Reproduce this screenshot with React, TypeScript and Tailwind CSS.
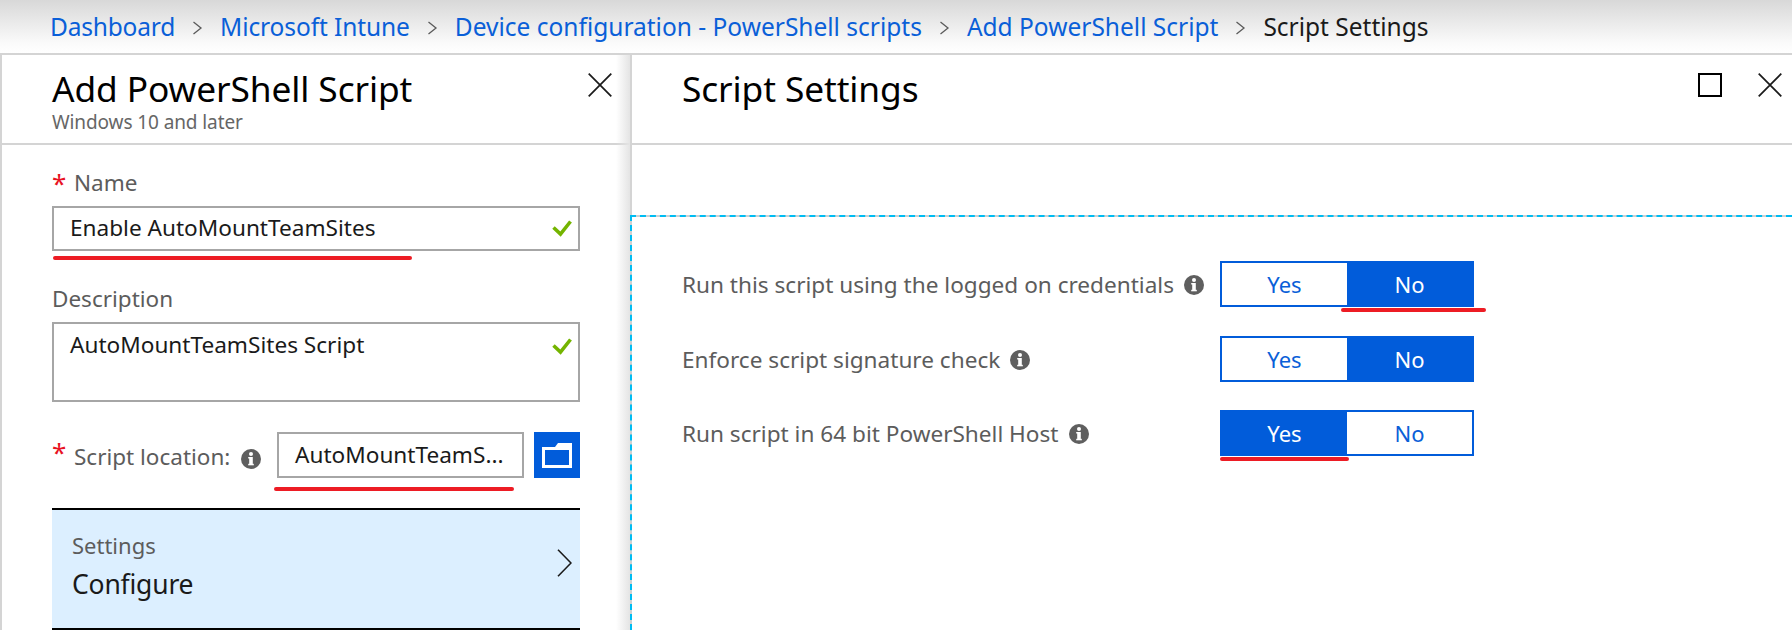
import React from "react";

function Info({ className }: { className: string }) {
  return (
    <svg viewBox="0 0 20 20" className={className} aria-hidden="true">
      <circle cx="10" cy="10" r="10" fill="#5f5f5f" />
      <rect x="8.2" y="8" width="3.6" height="8" fill="#fff" />
      <rect x="7.2" y="8" width="2" height="1.5" fill="#fff" />
      <rect x="7.2" y="14.8" width="5.6" height="1.5" fill="#fff" />
      <circle cx="10" cy="5" r="2" fill="#fff" />
    </svg>
  );
}

function Check() {
  return (
    <svg viewBox="0 0 20 17" className="w-[20px] h-[17px] shrink-0" aria-hidden="true">
      <path d="M1.5 7.5 L8.5 14 L18.5 1.5" fill="none" stroke="#74b400" strokeWidth="3.6" />
    </svg>
  );
}

function Sep() {
  return (
    <svg viewBox="0 0 11 14" className="w-[11px] h-[14px] mx-[17px] shrink-0" aria-hidden="true">
      <path d="M1.5 1 L9 7 L1.5 13" fill="none" stroke="#5a5a5a" strokeWidth="1.3" />
    </svg>
  );
}

function X({ className }: { className: string }) {
  return (
    <svg viewBox="0 0 24 24" className={className} aria-hidden="true">
      <path d="M0.7 0.7 L23.3 23.3 M23.3 0.7 L0.7 23.3" fill="none" stroke="#1a1a1a" strokeWidth="1.7" />
    </svg>
  );
}

function Toggle({ value }: { value: "Yes" | "No" }) {
  const on = "bg-[#015cda] text-white";
  const off = "bg-white text-[#0a5fd8]";
  return (
    <div className="flex w-[254px] h-[46px] border-2 border-[#015cda] text-[22px] shrink-0">
      <div className={`flex-1 flex items-center justify-center pt-[1px] ${value === "Yes" ? on : off}`}>Yes</div>
      <div className={`flex-1 flex items-center justify-center pt-[1px] ${value === "No" ? on : off}`}>No</div>
    </div>
  );
}

function Row({ label, value, underline }: { label: string; value: "Yes" | "No"; underline: string }) {
  return (
    <div className="relative flex items-center h-[46px]">
      <div className="w-[538px] flex items-center gap-[10px] text-[22.6px] text-[#5c5c5c] pt-[2px]">
        <span>{label}</span>
        <Info className="w-[20px] h-[20px] shrink-0 mt-[1px]" />
      </div>
      <Toggle value={value} />
      {underline ? <div className={underline} /> : null}
    </div>
  );
}

export default function App() {
  return (
    <div className="w-[1792px] h-[630px] overflow-hidden bg-white flex flex-col font-['Noto_Sans','Open_Sans',sans-serif]">
      <div className="h-[55px] shrink-0 flex items-center pl-[50px] pt-[2px] border-b-2 border-[#d4d4d4] bg-gradient-to-b from-[#d8d8d8] via-[#fafafa] via-80% to-white text-[24.5px] whitespace-nowrap">
        <span className="text-[#0a5fd8] tracking-[-0.2px]">Dashboard</span>
        <Sep />
        <span className="text-[#0a5fd8] tracking-[-0.1px]">Microsoft Intune</span>
        <Sep />
        <span className="text-[#0a5fd8]">Device configuration - PowerShell scripts</span>
        <Sep />
        <span className="text-[#0a5fd8]">Add PowerShell Script</span>
        <Sep />
        <span className="text-[#1a1a1a]">Script Settings</span>
      </div>

      <div className="flex flex-1 min-h-0">
        <div className="relative w-[632px] shrink-0 border-l-2 border-r-2 border-[#d4d4d4] flex flex-col">
          <div className="absolute right-0 top-0 bottom-0 w-[14px] bg-gradient-to-r from-transparent to-[#e4e4e4]" />
          <div className="h-[90px] shrink-0 border-b-2 border-[#d4d4d4] pl-[50px] pr-[18px] flex justify-between">
            <div>
              <div className="text-[35.3px] leading-[44px] mt-[11px] text-black tracking-[-0.1px]">Add PowerShell Script</div>
              <div className="text-[19px] leading-[22px] mt-[1px] text-[#666] tracking-[-0.1px]">Windows 10 and later</div>
            </div>
            <X className="w-[24px] h-[24px] mt-[18px] shrink-0" />
          </div>

          <div className="pl-[50px] w-[578px] relative flex flex-col">
            <div className="flex items-center h-[30px] mt-[23px] text-[22.5px] text-[#5c5c5c]">
              <span className="text-[#e81123] w-[22px] text-[26px] leading-[26px]">*</span>
              <span>Name</span>
            </div>
            <div className="h-[45px] mt-[8px] border-2 border-[#a6a6a6] flex items-center justify-between pl-[16px] pr-[6px] text-[22.6px] text-[#1a1a1a]">
              <span className="pb-[2px]">Enable AutoMountTeamSites</span>
              <Check />
            </div>
            <div className="text-[22.5px] text-[#5c5c5c] mt-[32px] h-[32px] leading-[32px]">Description</div>
            <div className="h-[80px] mt-[7px] border-2 border-[#a6a6a6] flex items-start justify-between pl-[16px] pr-[6px] pt-[4px] text-[22.6px] text-[#1a1a1a]">
              <span>AutoMountTeamSites Script</span>
              <div className="mt-[10px]"><Check /></div>
            </div>
            <div className="flex items-center h-[46px] mt-[30px]">
              <span className="text-[#e81123] w-[22px] text-[26px] leading-[26px] -mt-[6px]">*</span>
              <span className="text-[22.5px] text-[#5c5c5c] w-[167px] mt-[3px] whitespace-nowrap">Script location:</span>
              <Info className="w-[20px] h-[20px] shrink-0 mt-[8px]" />
              <div className="h-[46px] w-[247px] ml-[16px] border-2 border-[#a6a6a6] flex items-center pl-[16px] text-[22.6px] text-[#1a1a1a] whitespace-nowrap">AutoMountTeamS...</div>
              <div className="w-[46px] h-[46px] ml-[10px] bg-[#015cda] flex items-center justify-center">
                <svg viewBox="0 0 30 25" className="w-[30px] h-[25px]" aria-hidden="true">
                  <path fillRule="evenodd" d="M0 4 H13 L16 0 H30 V25 H0 Z M3 7 V22 H27 V7 Z" fill="#fff" />
                </svg>
              </div>
            </div>
            <div className="h-[122px] mt-[30px] bg-[#dcefff] border-t-2 border-b-2 border-black flex items-center justify-between pl-[20px] pr-[8px]">
              <div className="pb-[5px]">
                <div className="text-[22px] leading-[28px] text-[#5c5c5c]">Settings</div>
                <div className="text-[26.5px] leading-[36px] mt-[7px] text-[#1a1a1a] tracking-[-0.2px]">Configure</div>
              </div>
              <svg viewBox="0 0 15 28" className="w-[15px] h-[28px] mb-[12px]" aria-hidden="true">
                <path d="M1 0.7 L14 14 L1 27.3" fill="none" stroke="#1a1a1a" strokeWidth="1.6" />
              </svg>
            </div>
            <div className="absolute left-[51px] top-[111px] w-[359px] h-[4px] rounded-full bg-[#ed1c24]" />
            <div className="absolute left-[272px] top-[342px] w-[240px] h-[4px] rounded-full bg-[#ed1c24]" />
          </div>
        </div>

        <div className="flex-1 flex flex-col min-w-0">
          <div className="h-[90px] shrink-0 border-b-2 border-[#d4d4d4] pl-[50px] pr-[10px] flex justify-between">
            <div className="text-[35.3px] leading-[44px] mt-[11px] text-black tracking-[-0.1px]">Script Settings</div>
            <div className="flex gap-[36px] mt-[18px]">
              <div className="w-[24px] h-[24px] border-2 border-black" />
              <X className="w-[24px] h-[24px]" />
            </div>
          </div>
          <div className="h-[70px] shrink-0" />
          <div className="relative z-10 flex-1 -ml-[2px] flex flex-col bg-[#d0d0d0]">
            <div className="flex-1 bg-white bg-clip-padding border-t-2 border-l-2 border-dashed border-[#00bcf2] pl-[50px] pt-[44px] flex flex-col gap-[28.5px]">
              <Row label="Run this script using the logged on credentials" value="No" underline="absolute left-[659px] top-[47px] w-[145px] h-[4px] rounded-full bg-[#ed1c24]" />
              <Row label="Enforce script signature check" value="No" underline="" />
              <Row label="Run script in 64 bit PowerShell Host" value="Yes" underline="absolute left-[538px] top-[47px] w-[129px] h-[4px] rounded-full bg-[#ed1c24]" />
            </div>
          </div>
        </div>
      </div>
    </div>
  );
}
